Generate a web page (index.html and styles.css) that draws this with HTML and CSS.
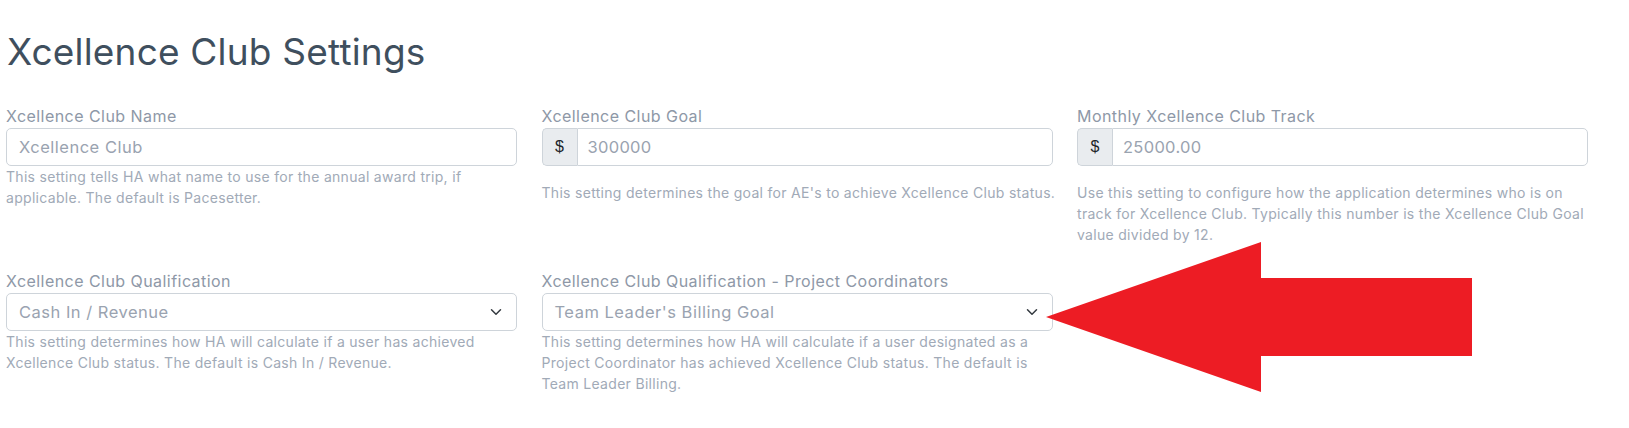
FILE: index.html
```html
<!DOCTYPE html>
<html lang="en">
<head>
<meta charset="utf-8">
<title>Xcellence Club Settings</title>
<link rel="stylesheet" href="styles.css">
</head>
<body>
<main class="page">
  <h1 class="title">Xcellence Club Settings</h1>
  <div class="grid">
    <div class="field">
      <label class="label">Xcellence Club Name</label>
      <div class="control">Xcellence Club</div>
      <p class="help">This setting tells HA what name to use for the annual award trip, if<br>applicable. The default is Pacesetter.</p>
    </div>
    <div class="field">
      <label class="label">Xcellence Club Goal</label>
      <div class="input-group">
        <span class="addon">$</span>
        <div class="control grouped">300000</div>
      </div>
      <p class="help">This setting determines the goal for AE's to achieve Xcellence Club status.</p>
    </div>
    <div class="field">
      <label class="label">Monthly Xcellence Club Track</label>
      <div class="input-group">
        <span class="addon">$</span>
        <div class="control grouped">25000.00</div>
      </div>
      <p class="help">Use this setting to configure how the application determines who is on<br>track for Xcellence Club. Typically this number is the Xcellence Club Goal<br>value divided by 12.</p>
    </div>
    <div class="field">
      <label class="label">Xcellence Club Qualification</label>
      <div class="control select">
        <span>Cash In / Revenue</span>
        <svg class="chevron" width="16" height="12" viewBox="0 0 16 16"><path d="m2 5 6 6 6-6" fill="none" stroke="#343a40" stroke-width="2" stroke-linecap="round" stroke-linejoin="round"/></svg>
      </div>
      <p class="help">This setting determines how HA will calculate if a user has achieved<br>Xcellence Club status. The default is Cash In / Revenue.</p>
    </div>
    <div class="field">
      <label class="label">Xcellence Club Qualification - Project Coordinators</label>
      <div class="control select">
        <span>Team Leader's Billing Goal</span>
        <svg class="chevron" width="16" height="12" viewBox="0 0 16 16"><path d="m2 5 6 6 6-6" fill="none" stroke="#343a40" stroke-width="2" stroke-linecap="round" stroke-linejoin="round"/></svg>
      </div>
      <p class="help">This setting determines how HA will calculate if a user designated as a<br>Project Coordinator has achieved Xcellence Club status. The default is<br>Team Leader Billing.</p>
    </div>
  </div>
  <svg class="arrow" width="436" height="156" viewBox="0 0 436 156">
    <polygon points="5,77 220,2 220,38 431,38 431,116 220,116 220,152" fill="#ed1c24"/>
  </svg>
</main>
</body>
</html>
```
FILE: styles.css
```css
* { box-sizing: border-box; }
html, body { margin: 0; padding: 0; background: #fff; }
body {
  font-family: Inter, "Open Sans", sans-serif;
  color: #8a94a3;
}
.page {
  position: relative;
  min-height: 428px;
  padding: 28px 0 0 6px;
}
.title {
  margin: 0 0 0 1px;
  font-size: 37px;
  line-height: 48px;
  font-weight: 400;
  color: #3f4f5e;
  letter-spacing: 0.2px;
}
.grid {
  display: grid;
  grid-template-columns: repeat(3, 511px);
  column-gap: 24.5px;
  row-gap: 24px;
  align-items: start;
  margin-top: 28px;
}
.field { display: flex; flex-direction: column; }
.label {
  font-size: 16px;
  line-height: 24px;
  color: #8e98a7;
  letter-spacing: 0.45px;
}
.control {
  height: 38px;
  border: 1px solid #ced4da;
  border-radius: 5px;
  padding: 0 12px;
  display: flex;
  align-items: center;
  font-size: 16.5px;
  letter-spacing: 0.5px;
  color: #9aa3b0;
  background: #fff;
}
.input-group {
  display: flex;
  margin-bottom: 16px;
}
.addon {
  width: 35px;
  height: 38px;
  display: flex;
  align-items: center;
  justify-content: center;
  background: #e9ecef;
  border: 1px solid #ced4da;
  border-right: none;
  border-radius: 5px 0 0 5px;
  font-family: "Liberation Sans", Arial, sans-serif;
  font-size: 16px;
  color: #212529;
}
.control.grouped {
  flex: 1;
  border-radius: 0 5px 5px 0;
  padding-left: 10px;
  letter-spacing: 0.3px;
}
.select { justify-content: space-between; }
.chevron { display: block; }
.help {
  margin: 0;
  font-size: 14px;
  line-height: 21px;
  letter-spacing: 0.3px;
  white-space: nowrap;
  color: #a1aab7;
}
.arrow {
  position: absolute;
  left: 1041px;
  top: 240px;
}
```
